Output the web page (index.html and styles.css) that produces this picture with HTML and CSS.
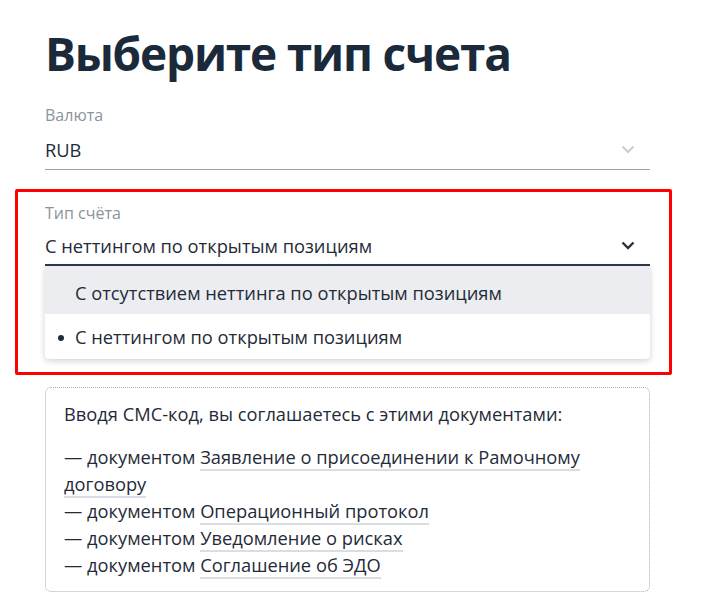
FILE: index.html
```html
<!DOCTYPE html>
<html lang="ru">
<head>
<meta charset="utf-8">
<link rel="stylesheet" href="styles.css">
</head>
<body>
<main class="page">
  <h1 class="title">Выберите тип счета</h1>

  <div class="field">
    <div class="label">Валюта</div>
    <div class="control">
      <span class="value">RUB</span>
      <svg class="chevron light" width="14" height="9" viewBox="0 0 14 9"><path d="M1.5 1.5 L7 7 L12.5 1.5" fill="none" stroke="currentColor" stroke-width="2"/></svg>
    </div>
  </div>

  <div class="highlight">
    <div class="field open">
      <div class="label">Тип счёта</div>
      <div class="control">
        <span class="value">С неттингом по открытым позициям</span>
        <svg class="chevron dark" width="14" height="9" viewBox="0 0 14 9"><path d="M1.5 1.5 L7 7 L12.5 1.5" fill="none" stroke="currentColor" stroke-width="2.4"/></svg>
      </div>
      <ul class="menu">
        <li class="option hover">С отсутствием неттинга по открытым позициям</li>
        <li class="option selected">С неттингом по открытым позициям</li>
      </ul>
    </div>
  </div>

  <section class="docs">
    <p class="intro">Вводя СМС-код, вы соглашаетесь с этими документами:</p>
    <p class="list">
      — документом <a class="link">Заявление о присоединении к Рамочному договору</a><br>
      — документом <a class="link">Операционный протокол</a><br>
      — документом <a class="link">Уведомление о рисках</a><br>
      — документом <a class="link">Соглашение об ЭДО</a>
    </p>
  </section>
</main>
</body>
</html>
```
FILE: styles.css
```css
html, body {
  margin: 0;
  padding: 0;
  background: #fff;
}
body {
  font-family: "Open Sans", "Noto Sans", sans-serif;
  color: #1f2b38;
}
.page {
  width: 605px;
  padding: 21px 0 0 45px;
}
.title {
  margin: 0 0 20px 0;
  font-size: 46px;
  line-height: 64px;
  font-weight: 700;
  color: #1a2a3b;
  letter-spacing: -1.2px;
}
.field {
  position: relative;
}
.label {
  font-size: 16px;
  line-height: 20px;
  color: #8a939d;
}
.control {
  display: flex;
  align-items: center;
  justify-content: space-between;
  height: 40px;
  padding-top: 4px;
  border-bottom: 1px solid #9aa3ad;
}
.value {
  font-size: 18.3px;
  color: #1f2b38;
}
.chevron {
  margin-right: 15px;
}
.chevron.light { color: #c9cdd2; }
.chevron.dark { color: #2a323b; }

.highlight {
  margin: 19px -22px 12px -30px;
  padding: 11px 19px 13px 27px;
  border: 3px solid #ff0000;
  border-radius: 2px;
}
.field.open .control {
  border-bottom: 2px solid #2b3a4a;
  height: 37px;
}
.menu {
  list-style: none;
  margin: 0;
  padding: 0;
  background: #fff;
  border-radius: 0 0 4px 4px;
  box-shadow: 0 2px 6px rgba(0,0,0,0.18);
  overflow: hidden;
}
.option {
  position: relative;
  padding-left: 30px;
  font-size: 18.3px;
  color: #1f2b38;
}
.option.hover {
  background: #ecedf0;
  padding-top: 6px;
  line-height: 42px;
}
.option.selected {
  padding-top: 1px;
  line-height: 44px;
}
.option.selected::before {
  content: "";
  position: absolute;
  left: 13px;
  top: 21px;
  width: 6px;
  height: 6px;
  border-radius: 50%;
  background: #1f2b38;
}
.docs {
  border: 1px dotted #a9aeb5;
  border-radius: 6px;
  padding: 12px 18px 13px 18px;
}
.intro {
  margin: 0 0 16px 0;
  font-size: 18.3px;
  line-height: 27px;
}
.list {
  margin: 0;
  font-size: 18.3px;
  line-height: 27px;
}
.link {
  color: #1f2b38;
  text-decoration: none;
  border-bottom: 2px solid #dadde2;
}
```
